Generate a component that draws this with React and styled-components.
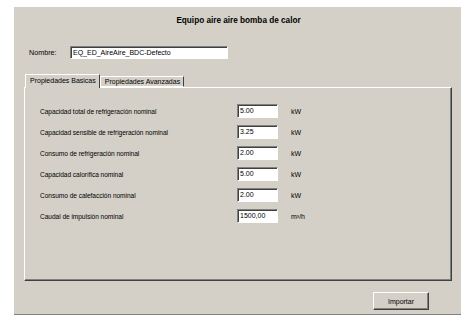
import React from "react";
import styled, { createGlobalStyle } from "styled-components";

const GlobalStyle = createGlobalStyle`
  body {
    margin: 0;
    background: #fff;
    font-family: "Liberation Sans", Arial, sans-serif;
    color: #000;
  }
`;

const Screen = styled.div`
  width: 470px;
  height: 324px;
  box-sizing: border-box;
  padding: 7px 0 0 14px;
`;

const Dialog = styled.div`
  width: 447px;
  height: 308px;
  box-sizing: border-box;
  background: #d4d0c8;
  border-bottom: 1px solid #808080;
  display: flex;
  flex-direction: column;
  padding: 0 9px 0 10px;
`;

const Title = styled.div`
  margin-top: 9px;
  height: 10px;
  line-height: 10px;
  font-size: 8.2px;
  font-weight: bold;
  text-align: center;
  padding-left: 1px;
`;

const NameRow = styled.div`
  margin-top: 20px;
  display: flex;
  align-items: center;
  padding-left: 5px;
  height: 13px;
`;

const NameLabel = styled.span`
  width: 41px;
  font-size: 7.2px;
`;

const TextBox = styled.div`
  box-sizing: border-box;
  width: ${({ $w }) => $w}px;
  height: ${({ $h }) => $h}px;
  background: #fff;
  border: 1px solid;
  border-color: #808080 #fff #fff #808080;
  box-shadow: inset 1px 1px 0 #404040;
  font-size: 7px;
  line-height: ${({ $h }) => $h - 2}px;
  padding-left: 2px;
  white-space: nowrap;
  overflow: hidden;
`;

const TabStrip = styled.div`
  margin-top: 14px;
  display: flex;
  align-items: flex-end;
  padding-left: 1px;
  height: 14px;
  position: relative;
  z-index: 1;
`;

const Tab = styled.div`
  box-sizing: border-box;
  height: ${({ $active }) => ($active ? 14 : 11)}px;
  line-height: ${({ $active }) => ($active ? 12 : 10)}px;
  padding: 0 3px 0 4px;
  background: #d4d0c8;
  border-top: 1px solid #fff;
  border-left: 1px solid #fff;
  border-right: 1px solid #404040;
  border-bottom: ${({ $active }) => ($active ? "none" : "1px solid #fff")};
  margin-bottom: ${({ $active }) => ($active ? "-1px" : "0")};
  font-size: 7px;
  white-space: nowrap;
`;

const TabPanel = styled.div`
  box-sizing: border-box;
  height: 194px;
  border-top: 1px solid #fff;
  border-left: 1px solid #fff;
  border-right: 1px solid #404040;
  border-bottom: 1px solid #404040;
  box-shadow: inset -1px -1px 0 #808080;
  display: flex;
  flex-direction: column;
  gap: 7px;
  padding: 16px 0 0 15px;
`;

const PropRow = styled.div`
  display: grid;
  grid-template-columns: 197px 54px auto;
  align-items: center;
  height: 14px;
`;

const PropLabel = styled.span`
  font-size: 6.6px;
  letter-spacing: -0.05px;
  white-space: nowrap;
`;

const Unit = styled.span`
  font-size: 7px;
`;

const Footer = styled.div`
  display: flex;
  justify-content: flex-end;
  padding: 11px 23px 0 0;
`;

const Button = styled.div`
  box-sizing: border-box;
  width: 56px;
  height: 18px;
  display: flex;
  align-items: center;
  justify-content: center;
  font-size: 7px;
  background: #d4d0c8;
  border-top: 1px solid #fff;
  border-left: 1px solid #fff;
  border-right: 1px solid #404040;
  border-bottom: 1px solid #404040;
  box-shadow: inset -1px -1px 0 #808080;
`;

const props = [
  ["Capacidad total de refrigeración nominal", "5.00", "kW"],
  ["Capacidad sensible de refrigeración nominal", "3.25", "kW"],
  ["Consumo de refrigeración nominal", "2.00", "kW"],
  ["Capacidad calorífica nominal", "5.00", "kW"],
  ["Consumo de calefacción nominal", "2.00", "kW"],
  ["Caudal de impulsión nominal", "1500,00", "m³/h"],
];

export default function App() {
  return (
    <>
      <GlobalStyle />
      <Screen>
        <Dialog>
          <Title>Equipo aire aire bomba de calor</Title>
          <NameRow>
            <NameLabel>Nombre:</NameLabel>
            <TextBox $w={158} $h={13}>EQ_ED_AireAire_BDC-Defecto</TextBox>
          </NameRow>
          <TabStrip>
            <Tab $active>Propiedades Basicas</Tab>
            <Tab>Propiedades Avanzadas</Tab>
          </TabStrip>
          <TabPanel>
            {props.map(([label, value, unit]) => (
              <PropRow key={label}>
                <PropLabel>{label}</PropLabel>
                <TextBox $w={41} $h={14}>{value}</TextBox>
                <Unit>{unit}</Unit>
              </PropRow>
            ))}
          </TabPanel>
          <Footer>
            <Button>Importar</Button>
          </Footer>
        </Dialog>
      </Screen>
    </>
  );
}
